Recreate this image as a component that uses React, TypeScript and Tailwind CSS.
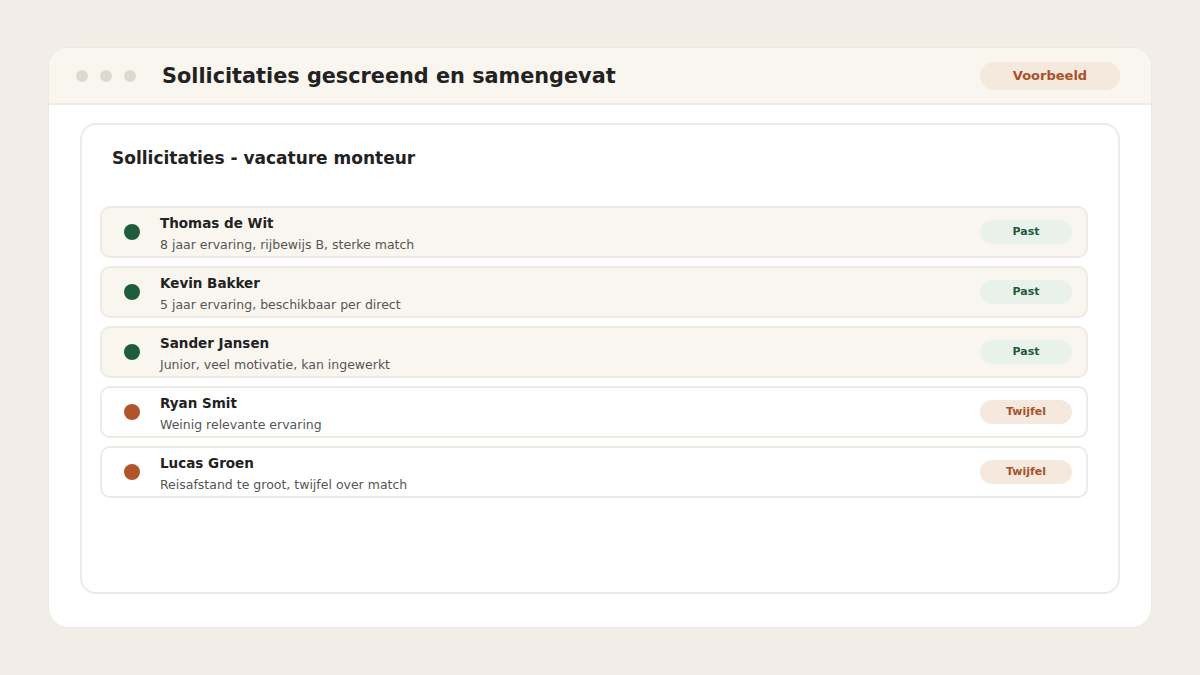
const candidates = [
  { name: "Thomas de Wit", note: "8 jaar ervaring, rijbewijs B, sterke match", status: "past" },
  { name: "Kevin Bakker", note: "5 jaar ervaring, beschikbaar per direct", status: "past" },
  { name: "Sander Jansen", note: "Junior, veel motivatie, kan ingewerkt", status: "past" },
  { name: "Ryan Smit", note: "Weinig relevante ervaring", status: "twijfel" },
  { name: "Lucas Groen", note: "Reisafstand te groot, twijfel over match", status: "twijfel" },
];

export default function App() {
  return (
    <main
      className="min-h-screen w-full bg-[#F2EDE6] px-12 pt-[47px]"
      style={{ fontFamily: '"DejaVu Sans", sans-serif' }}
    >
      <div className="h-[581px] w-full overflow-hidden rounded-[20px] border border-[#ECE7DF] bg-white">
        {/* title bar */}
        <div className="flex h-[57px] items-center border-b-2 border-[#EEE9E2] bg-[#F9F6F0] pl-[27px] pr-[31px]">
          <div className="flex gap-3">
            <span className="h-3 w-3 rounded-full bg-[#DDD8D0]" />
            <span className="h-3 w-3 rounded-full bg-[#DDD8D0]" />
            <span className="h-3 w-3 rounded-full bg-[#DDD8D0]" />
          </div>
          <h1 className="ml-[26px] mt-[2px] text-[20.8px] font-bold text-[#222222]">
            Sollicitaties gescreend en samengevat
          </h1>
          <span className="ml-auto flex h-7 w-[140px] items-center justify-center rounded-full bg-[#F5E8DD] text-[13px] font-bold text-[#A8522A]">
            Voorbeeld
          </span>
        </div>

        <div className="px-[31px] pt-[18px]">
          <section className="h-[471px] rounded-2xl border-2 border-[#EEEBE6] pl-[18px] pr-[30px] pt-[21px]">
            <h2 className="pl-3 text-[17px] font-bold leading-6 text-[#222222]">Sollicitaties - vacature monteur</h2>
            <div className="mt-[36px] flex flex-col gap-2">
              {candidates.map((c) => {
                const past = c.status === "past";
                return (
                  <div
                    key={c.name}
                    className={
                      "flex h-[52px] items-center rounded-[10px] border-2 border-[#EEEAE4] pl-[22px] pr-[14px] " +
                      (past ? "bg-[#F9F6F0]" : "bg-white")
                    }
                  >
                    <span
                      className={"h-4 w-4 shrink-0 rounded-full " + (past ? "bg-[#1F5C3B]" : "bg-[#B0552A]")}
                    />
                    <div className="ml-5 flex flex-col pt-[3px]">
                      <span className="text-[13.5px] font-bold leading-[18px] text-[#222222]">{c.name}</span>
                      <span className="mt-[5px] text-[12.5px] leading-4 text-[#555555]">{c.note}</span>
                    </div>
                    <span
                      className={
                        "ml-auto flex h-6 w-[92px] items-center justify-center rounded-full text-[11px] font-bold " +
                        (past ? "bg-[#E9F2EA] text-[#245A3C]" : "bg-[#F5E8DD] text-[#A8522A]")
                      }
                    >
                      {past ? "Past" : "Twijfel"}
                    </span>
                  </div>
                );
              })}
            </div>
          </section>
        </div>
      </div>
    </main>
  );
}
